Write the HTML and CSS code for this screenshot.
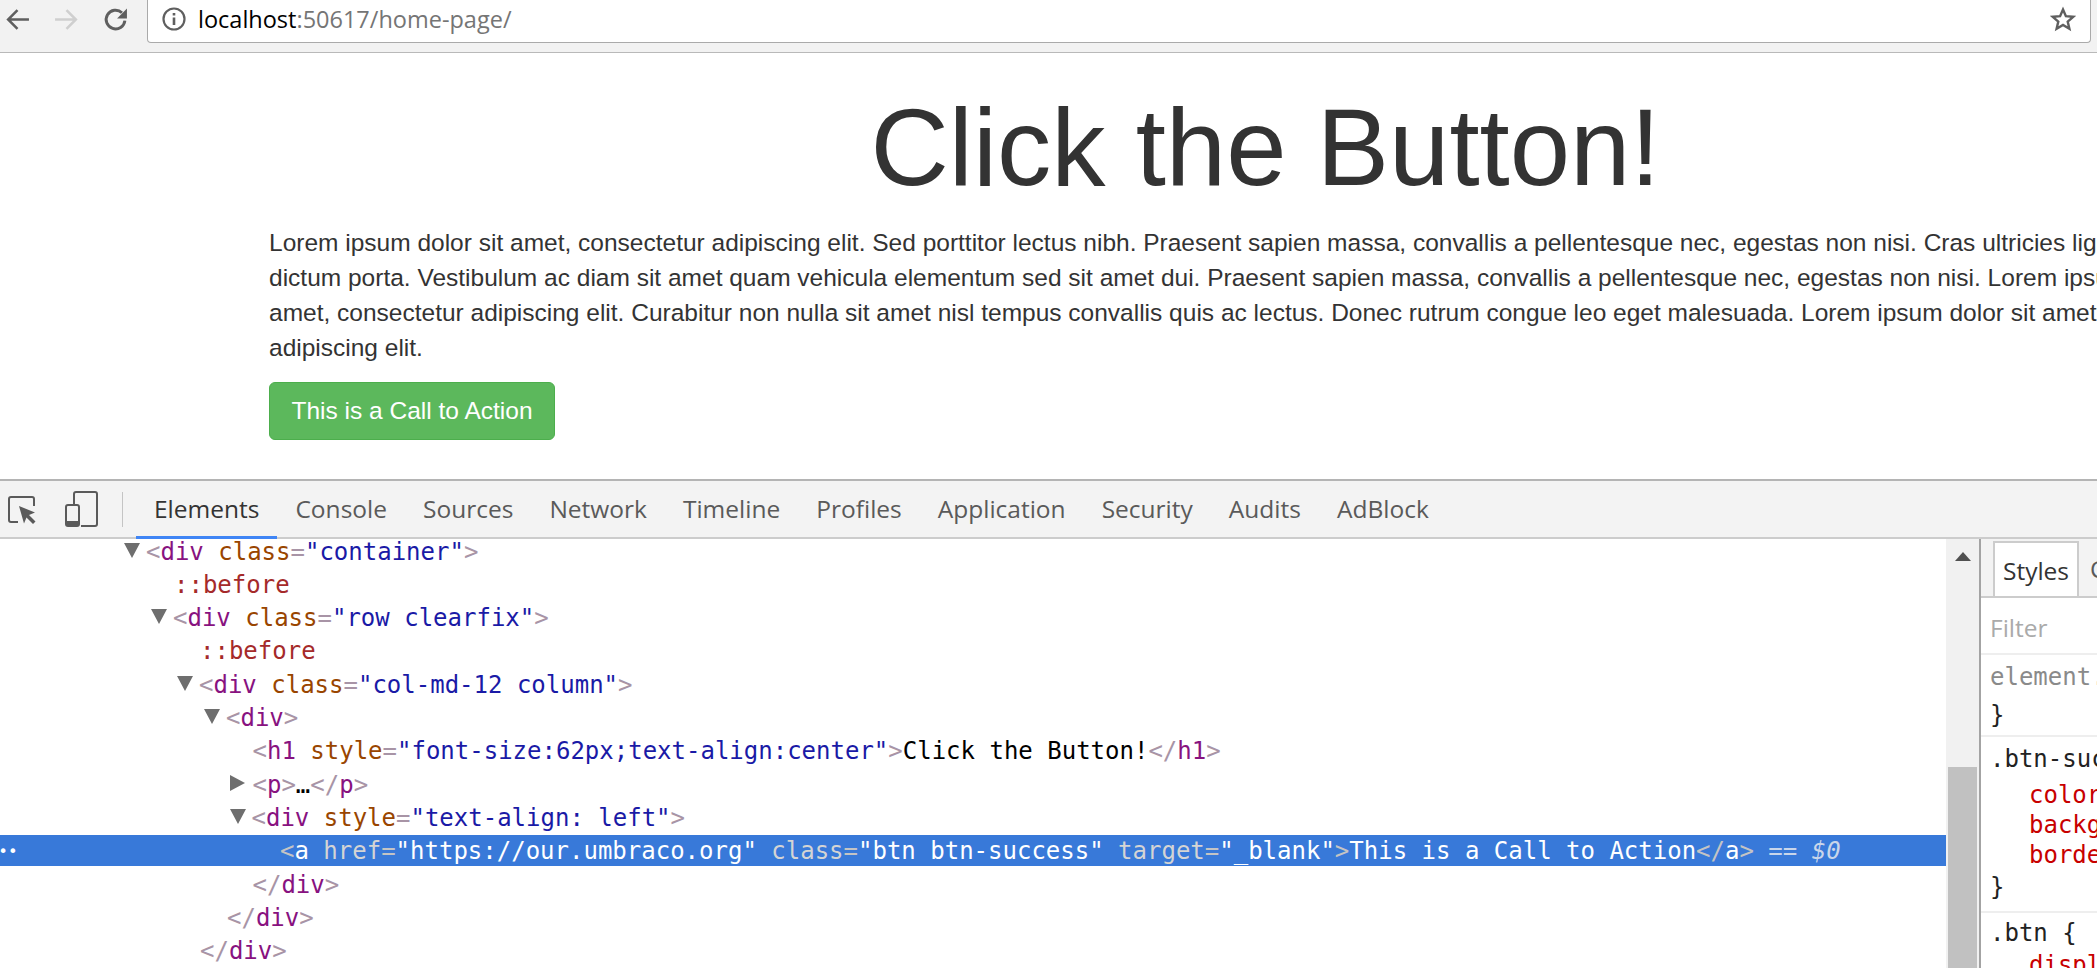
FILE: index.html
```html
<!DOCTYPE html>
<html lang="en">
<head>
<meta charset="utf-8">
<title>Click the Button!</title>
<link rel="stylesheet" href="styles.css">
</head>
<body>
<header class="chrome">
  <div class="nav">
    <svg class="nav-icon" viewBox="0 0 24 24"><path d="M23 12H3M12 3l-9 9 9 9" fill="none" stroke="#5f5f5f" stroke-width="2.400"/></svg>
    <svg class="nav-icon" viewBox="0 0 24 24"><path d="M1 12h20M12 3l9 9-9 9" fill="none" stroke="#cfcfcf" stroke-width="2.400"/></svg>
    <svg class="nav-icon" viewBox="0 0 24 24"><path d="M21 13a9 9 0 1 1-2.800-7.500" fill="none" stroke="#5f5f5f" stroke-width="2.800"/><path d="M23 1.500V11h-9.500z" fill="#5f5f5f"/></svg>
  </div>
  <div class="omnibox">
    <svg class="info-icon" viewBox="0 0 24 24"><circle cx="12" cy="12" r="10.500" fill="none" stroke="#5f5f5f" stroke-width="2.200"/><path d="M10.700 10.500h2.600v7.500h-2.600zM10.700 6h2.600v2.600h-2.600z" fill="#5f5f5f"/></svg>
    <span class="url"><span class="host">localhost</span>:50617/home-page/</span>
    <svg class="star-icon" viewBox="0 0 26 26"><path d="M13 3.500l2.900 6.700 7.300.6-5.500 4.800 1.700 7.100L13 19l-6.400 3.700 1.700-7.100-5.500-4.800 7.300-.6z" fill="none" stroke="#5f5f5f" stroke-width="2.400"/></svg>
  </div>
</header>

<main class="page">
  <div class="container">
    <h1 class="title">Click the Button!</h1>
    <p class="lead">Lorem ipsum dolor sit amet, consectetur adipiscing elit. Sed porttitor lectus nibh. Praesent sapien massa, convallis a pellentesque nec, egestas non nisi. Cras ultricies ligula sed magna dictum porta. Vestibulum ac diam sit amet quam vehicula elementum sed sit amet dui. Praesent sapien massa, convallis a pellentesque nec, egestas non nisi. Lorem ipsum dolor sit amet, consectetur adipiscing elit. Curabitur non nulla sit amet nisl tempus convallis quis ac lectus. Donec rutrum congue leo eget malesuada. Lorem ipsum dolor sit amet, consectetur adipiscing elit.</p>
    <a class="cta" href="#">This is a Call to Action</a>
  </div>
</main>

<section class="devtools">
  <div class="dt-bar">
    <svg class="dt-inspect" viewBox="0 0 29 29"><path d="M10 26H3a2 2 0 0 1-2-2V3a2 2 0 0 1 2-2h21a2 2 0 0 1 2 2v7" fill="none" stroke="#5a5a5a" stroke-width="2"/><path d="M11 10l16 6.500-6 2.500 6.500 6.500-2.500 2.500-6.500-6.500-2.500 6z" fill="#5a5a5a"/></svg>
    <svg class="dt-device" viewBox="0 0 33 36"><path d="M9 15V3a2 2 0 0 1 2-2h19a2 2 0 0 1 2 2v30a2 2 0 0 1-2 2H16" fill="none" stroke="#5a5a5a" stroke-width="2"/><rect x="1" y="14" width="13" height="21" rx="2" fill="none" stroke="#5a5a5a" stroke-width="2"/><rect x="1" y="30" width="13" height="5" fill="#5a5a5a"/></svg>
    <span class="dt-sep"></span>
    <nav class="dt-tabs">
      <span class="dt-tab active">Elements</span>
      <span class="dt-tab">Console</span>
      <span class="dt-tab">Sources</span>
      <span class="dt-tab">Network</span>
      <span class="dt-tab">Timeline</span>
      <span class="dt-tab">Profiles</span>
      <span class="dt-tab">Application</span>
      <span class="dt-tab">Security</span>
      <span class="dt-tab">Audits</span>
      <span class="dt-tab">AdBlock</span>
    </nav>
  </div>
  <div class="dt-body">
    <div class="tree">
      <div class="tree-inner">
        <div class="row l0"><i class="tri down"></i><b>&lt;</b><u>div</u> <em>class</em><b>=</b><s>"container"</s><b>&gt;</b></div>
        <div class="row l1"><span class="pseudo">::before</span></div>
        <div class="row l1"><i class="tri down"></i><b>&lt;</b><u>div</u> <em>class</em><b>=</b><s>"row clearfix"</s><b>&gt;</b></div>
        <div class="row l2"><span class="pseudo">::before</span></div>
        <div class="row l2"><i class="tri down"></i><b>&lt;</b><u>div</u> <em>class</em><b>=</b><s>"col-md-12 column"</s><b>&gt;</b></div>
        <div class="row l3"><i class="tri down"></i><b>&lt;</b><u>div</u><b>&gt;</b></div>
        <div class="row l4"><b>&lt;</b><u>h1</u> <em>style</em><b>=</b><s>"font-size:62px;text-align:center"</s><b>&gt;</b>Click the Button!<b>&lt;/</b><u>h1</u><b>&gt;</b></div>
        <div class="row l4"><i class="tri right"></i><b>&lt;</b><u>p</u><b>&gt;</b>…<b>&lt;/</b><u>p</u><b>&gt;</b></div>
        <div class="row l4"><i class="tri down"></i><b>&lt;</b><u>div</u> <em>style</em><b>=</b><s>"text-align: left"</s><b>&gt;</b></div>
        <div class="row l5 selected"><span class="dots">•••</span><b>&lt;</b><u>a</u> <em>href</em><b>=</b><s>"https://our.umbraco.org"</s> <em>class</em><b>=</b><s>"btn btn-success"</s> <em>target</em><b>=</b><s>"_blank"</s><b>&gt;</b>This is a Call to Action<b>&lt;/</b><u>a</u><b>&gt;</b> <span class="eq">== <var>$0</var></span></div>
        <div class="row l4"><b>&lt;/</b><u>div</u><b>&gt;</b></div>
        <div class="row l3"><b>&lt;/</b><u>div</u><b>&gt;</b></div>
        <div class="row l2"><b>&lt;/</b><u>div</u><b>&gt;</b></div>
      </div>
    </div>
    <div class="scrollbar">
      <svg class="scroll-up" viewBox="0 0 16 9"><path d="M8 0l8 9H0z" fill="#505050"/></svg>
      <div class="thumb"></div>
    </div>
    <aside class="styles">
      <div class="styles-tabs">
        <span class="styles-tab">Styles</span>
        <span class="styles-next">Computed</span>
      </div>
      <div class="filter">Filter</div>
      <div class="rule rule-el"><div class="sel muted">element.style {</div><div class="sel">}</div></div>
      <div class="rule rule-success">
        <div class="sel">.btn-success {</div>
        <div class="prop">color: #fff;</div>
        <div class="prop">background-color: #5cb85c;</div>
        <div class="prop">border-color: #4cae4c;</div>
        <div class="sel">}</div>
      </div>
      <div class="rule rule-btn">
        <div class="sel">.btn {</div>
        <div class="prop">display: inline-block;</div>
      </div>
    </aside>
  </div>
</section>
</body>
</html>
```

FILE: styles.css
```css
* { box-sizing: border-box; }
html, body { margin: 0; height: 100%; }
body {
  width: 2097px;
  height: 968px;
  overflow: hidden;
  display: flex;
  flex-direction: column;
  background: #fff;
  font-family: "Liberation Sans", Arial, sans-serif;
}

/* Browser chrome */
.chrome {
  flex: none;
  height: 53px;
  display: flex;
  background: #f2f2f2;
  border-bottom: 1px solid #b9b9b9;
  padding: 0 6px 9px 0;
}
.nav {
  width: 147px;
  flex: none;
  display: flex;
  gap: 24px;
  align-items: center;
  padding: 0 0 5px 5px;
}
.nav-icon { width: 25px; height: 25px; flex: none; }
.omnibox {
  flex: 1;
  display: flex;
  align-items: center;
  background: #fff;
  border: 1px solid #aaa;
  border-top: 0;
  border-radius: 0 0 4px 4px;
  padding: 0 14px 5px 14px;
}
.info-icon { width: 24px; height: 24px; flex: none; }
.url {
  margin-left: 12px;
  font-family: "Open Sans", sans-serif;
  font-size: 23.500px;
  color: #757575;
  flex: 1;
  white-space: nowrap;
}
.host { color: #000; }
.star-icon { width: 26px; height: 26px; flex: none; }

/* Page */
.page {
  flex: none;
  height: 426px;
  overflow: hidden;
  padding: 37px 0 0 269px;
}
.container { width: 1993px; }
.title {
  margin: 0;
  font-size: 108.500px;
  font-weight: 400;
  line-height: 115px;
  text-align: center;
  color: #333;
}
.lead {
  margin: 20px 0 0;
  font-size: 24.500px;
  line-height: 35px;
  color: #333;
}
.cta {
  display: inline-block;
  margin-top: 17px;
  width: 286px;
  height: 58px;
  line-height: 56px;
  text-align: center;
  font-size: 24.500px;
  color: #fff;
  text-decoration: none;
  background: #5cb85c;
  border: 1px solid #4cae4c;
  border-radius: 6px;
}

/* Devtools */
.devtools {
  flex: 1;
  min-height: 0;
  display: flex;
  flex-direction: column;
  border-top: 2px solid #b4b4b4;
}
.dt-bar {
  flex: none;
  height: 58px;
  display: flex;
  align-items: center;
  background: #f3f3f3;
  border-bottom: 2px solid #ccc;
  padding-left: 8px;
}
.dt-inspect { width: 29px; height: 29px; flex: none; margin-top: 2px; }
.dt-device { width: 33px; height: 36px; flex: none; margin-left: 28px; }
.dt-sep { width: 1px; height: 35px; background: #c4c4c4; margin-left: 24px; flex: none; }
.dt-tabs {
  display: flex;
  align-self: stretch;
  margin: 0 0 -2px 13px;
  font-family: "Open Sans", sans-serif;
  font-size: 24.500px;
  color: #5a5a5a;
}
.dt-tab {
  padding: 0 18px;
  line-height: 56px;
  white-space: nowrap;
}
.dt-tab.active {
  color: #333;
  border-bottom: 3px solid #3f85f5;
}
.dt-body {
  flex: 1;
  min-height: 0;
  display: flex;
}
.tree {
  width: 1946px;
  flex: none;
  overflow: hidden;
  font-family: "DejaVu Sans Mono", monospace;
  font-size: 24px;
  color: #000;
}
.tree-inner { margin-top: -3.500px; }
.row {
  position: relative;
  height: 33.330px;
  line-height: 33.330px;
  white-space: pre;
}
.row b { font-weight: 400; color: #a894a6; }
.row u { text-decoration: none; color: #881280; }
.row em { font-style: normal; color: #994500; }
.row s { text-decoration: none; color: #1a1aa6; }
.pseudo { color: #a52a2a; }
.l0 { padding-left: 147px; }
.l1 { padding-left: 174px; }
.l2 { padding-left: 200px; }
.l3 { padding-left: 227px; }
.l4 { padding-left: 252.500px; }
.l5 { padding-left: 280px; }
.tri {
  display: inline-block;
  width: 0;
  height: 0;
  margin-left: -23px;
  margin-right: 6px;
  vertical-align: 2px;
}
.tri.down {
  border-left: 8.500px solid transparent;
  border-right: 8.500px solid transparent;
  border-top: 15px solid #6e6e6e;
}
.tri.right {
  border-top: 8px solid transparent;
  border-bottom: 8px solid transparent;
  border-left: 15px solid #6e6e6e;
  margin-right: 8px;
}
.row.selected {
  color: #fff;
  background: linear-gradient(#3879d9, #3879d9) 0 0 / 100% 31px no-repeat;
}
.selected b { color: #c4c4c4; }
.selected u, .selected s { color: #fff; }
.selected em { color: #d4d4d4; }
.eq { color: #c9d6ea; }
.eq var { font-style: italic; }
.dots {
  position: absolute;
  left: -11.400px;
  top: 0;
  font-size: 16px;
  color: #fff;
}
.scrollbar {
  width: 33px;
  flex: none;
  position: relative;
  background: #f1f1f1;
  padding: 13px 0 0 9px;
}
.scroll-up { display: block; width: 16px; height: 9px; }
.thumb {
  position: absolute;
  left: 2px;
  right: 2px;
  top: 228px;
  bottom: 0;
  background: #c1c1c1;
}
.styles {
  flex: 1;
  min-width: 0;
  overflow: hidden;
  border-left: 2px solid #a3a3a3;
  font-family: "DejaVu Sans Mono", monospace;
  font-size: 24px;
  color: #222;
}
.styles-tabs {
  height: 59px;
  display: flex;
  align-items: flex-end;
  background: #f3f3f3;
  border-bottom: 2px solid #ccc;
  padding: 0 0 0 12px;
  font-family: "Open Sans", sans-serif;
  font-size: 24.500px;
  color: #5a5a5a;
}
.styles-tab {
  width: 86px;
  height: 55px;
  flex: none;
  text-align: center;
  line-height: 56px;
  color: #333;
  background: #fff;
  border: 2px solid #ccc;
  border-bottom: 0;
}
.styles-next { margin-left: 11px; line-height: 56px; height: 55px; white-space: nowrap; }
.filter {
  height: 57px;
  padding: 2px 0 0 9px;
  line-height: 56px;
  font-family: "Open Sans", sans-serif;
  font-size: 24.500px;
  color: #aaa;
  border-bottom: 2px solid #eee;
}
.rule {
  border-bottom: 2px solid #eee;
  white-space: nowrap;
  padding-left: 9px;
}
.rule-el { padding-top: 3px; padding-bottom: 1px; }
.rule-el .sel { height: 38px; line-height: 38px; }
.muted { color: #8a8a8a; }
.sel { height: 33px; line-height: 33px; }
.rule-success { padding-top: 5.500px; padding-bottom: 7px; }
.rule-success .sel:first-child { margin-bottom: 4px; }
.rule-success .sel:last-child { margin-top: 1.500px; }
.rule-btn { padding-top: 3.500px; border-bottom: 0; }
.prop {
  height: 30px;
  line-height: 30px;
  padding-left: 39px;
  color: #c80000;
}
```
